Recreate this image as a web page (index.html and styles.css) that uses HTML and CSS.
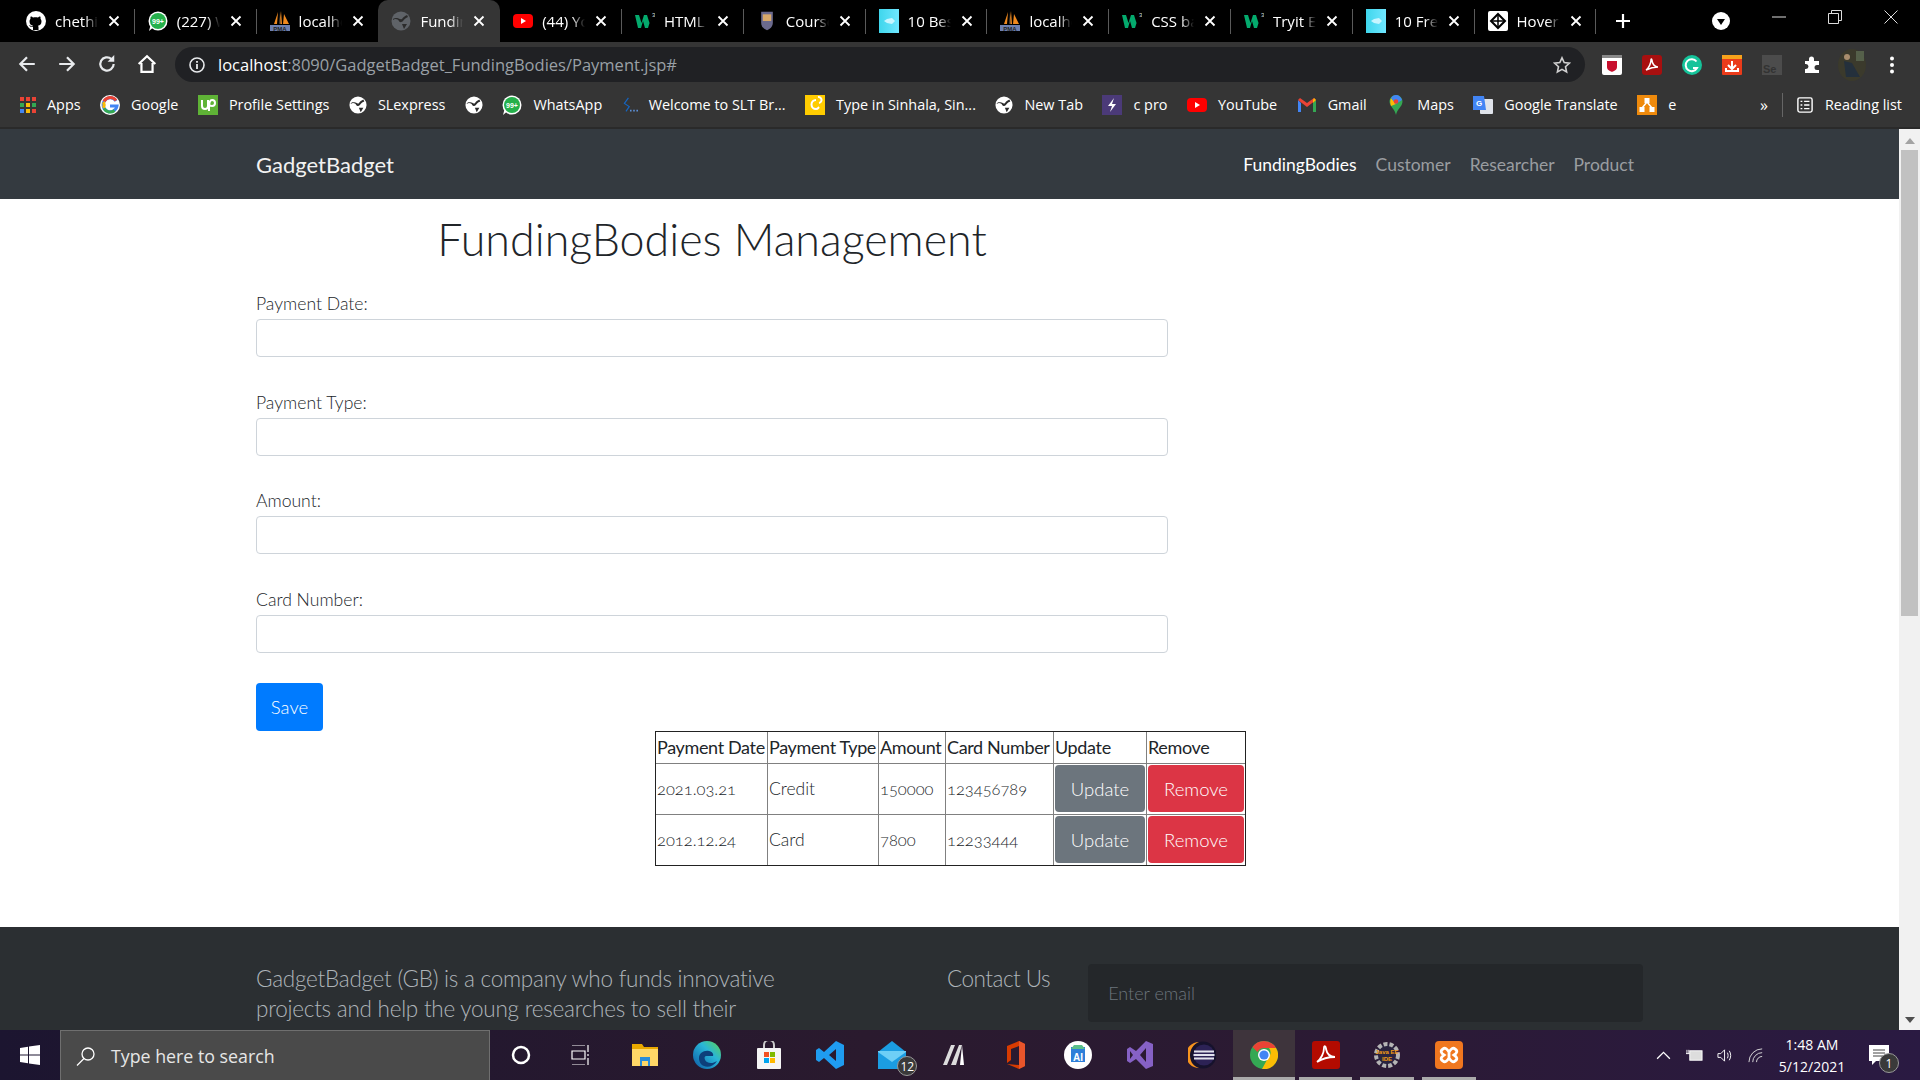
FILE: index.html
```html
<!DOCTYPE html>
<html lang="en">
<head>
    <meta charset="UTF-8">
    <title>FundingBodies Management</title>
    <link rel="stylesheet" href="styles.css">
</head>
<body>
    <!-- icons used more than once -->
    <svg class="defs" width="0" height="0">
        <symbol id="i-github" viewBox="0 0 20 20"><circle cx="10" cy="10" r="10" fill="#fff"/><path d="M7 19v-3c-3 .6-3.500-1.500-4-2 1 0 1.500 1 2.500 1.300.7.200 1.200 0 1.500-.5-2-.5-3.500-1.500-3.500-4.500 0-1 .3-1.800 1-2.500-.2-.8-.1-1.600.2-2.300 1 0 1.800.6 2.400 1 1.500-.4 3.300-.4 4.800 0 .6-.4 1.400-1 2.400-1 .3.700.4 1.500.2 2.300.7.700 1 1.500 1 2.500 0 3-1.500 4-3.500 4.500.4.500.5 1 .5 1.700V19z" fill="#000"/></symbol>
        <symbol id="i-whatsapp" viewBox="0 0 20 20"><circle cx="10" cy="10" r="9.500" fill="#fff"/><path d="M1 20l1.500-5.500h5z" fill="#fff"/><circle cx="10" cy="10" r="8" fill="#25b04b"/><text x="10" y="12.600" font-size="7" font-weight="700" fill="#fff" text-anchor="middle" font-family="Liberation Sans">99+</text></symbol>
        <symbol id="i-pma" viewBox="0 0 20 20"><path d="M8 1L4 13h3zM11 0l-2 13h3zM14 3l-1 10h6z" fill="#f0891d"/><path d="M10 0L9 13h1.500z" fill="#333"/><rect y="14" width="20" height="6" fill="#6d7fae"/><text x="10" y="19.500" font-size="6" font-weight="700" fill="#222" text-anchor="middle" font-family="Liberation Sans">PMA</text></symbol>
        <symbol id="i-globe" viewBox="0 0 20 20"><circle cx="10" cy="10" r="9.500" fill="currentColor"/><path d="M2 9c2-2 5-1 6 1s3 1 4 0 2-3 5-4l-1-2c-2 1-4 2-5 4-2 1-3-1-5-1s-3 0-4 1zM11 13l5 0-3 5z" class="globe-land"/></symbol>
        <symbol id="i-youtube" viewBox="0 0 20 20"><rect y="3" width="20" height="14" rx="4" fill="#f00"/><path d="M8 7l5 3-5 3z" fill="#fff"/></symbol>
        <symbol id="i-w3" viewBox="0 0 20 20"><path d="M0 4h4l2.500 8L9 4h3l2.500 8L17 4l0 0-4 13h-3L8 10l-2 7H3z" fill="#04aa6d"/><text x="17" y="6" font-size="6" fill="#ddd" font-family="Liberation Sans">3</text></symbol>
        <symbol id="i-fish" viewBox="0 0 20 24"><defs><linearGradient id="g-fish" x1="0" y1="0" x2="1" y2="0"><stop offset="0" stop-color="#3fd6ec"/><stop offset="1" stop-color="#6fe6ff"/></linearGradient></defs><rect width="20" height="24" fill="url(#g-fish)"/><path d="M5 12l3-2 5-1 3 3-3 3-5-1z" fill="#c7f5ff"/></symbol>
        <symbol id="i-close" viewBox="0 0 12 12"><path d="M1.500 1.500l9 9M10.500 1.500l-9 9" stroke="#fff" stroke-width="1.800" fill="none"/></symbol>
    </svg>

    <div class="tabstrip">
        <div class="tab"><svg class="favicon"><use href="#i-github"/></svg><span class="tab-title">chethil</span><svg class="tab-x"><use href="#i-close"/></svg></div>
        <div class="tab"><svg class="favicon"><use href="#i-whatsapp"/></svg><span class="tab-title">(227) W</span><svg class="tab-x"><use href="#i-close"/></svg></div>
        <div class="tab tab-noline"><svg class="favicon"><use href="#i-pma"/></svg><span class="tab-title">localho</span><svg class="tab-x"><use href="#i-close"/></svg></div>
        <div class="tab tab-active"><svg class="favicon globe-dim"><use href="#i-globe"/></svg><span class="tab-title">Funding</span><svg class="tab-x"><use href="#i-close"/></svg></div>
        <div class="tab"><svg class="favicon"><use href="#i-youtube"/></svg><span class="tab-title">(44) Yo</span><svg class="tab-x"><use href="#i-close"/></svg></div>
        <div class="tab"><svg class="favicon"><use href="#i-w3"/></svg><span class="tab-title">HTML</span><svg class="tab-x"><use href="#i-close"/></svg></div>
        <div class="tab"><svg class="favicon" viewBox="0 0 20 24"><path d="M3 1h14v13c0 5-4 8-7 9-3-1-7-4-7-9z" fill="#6b6a8e"/><rect x="5" y="4" width="10" height="8" fill="#d9a96a"/></svg><span class="tab-title">Course</span><svg class="tab-x"><use href="#i-close"/></svg></div>
        <div class="tab"><svg class="favicon favicon-tall"><use href="#i-fish"/></svg><span class="tab-title">10 Bes</span><svg class="tab-x"><use href="#i-close"/></svg></div>
        <div class="tab"><svg class="favicon"><use href="#i-pma"/></svg><span class="tab-title">localho</span><svg class="tab-x"><use href="#i-close"/></svg></div>
        <div class="tab"><svg class="favicon"><use href="#i-w3"/></svg><span class="tab-title">CSS ba</span><svg class="tab-x"><use href="#i-close"/></svg></div>
        <div class="tab"><svg class="favicon"><use href="#i-w3"/></svg><span class="tab-title">Tryit E</span><svg class="tab-x"><use href="#i-close"/></svg></div>
        <div class="tab"><svg class="favicon favicon-tall"><use href="#i-fish"/></svg><span class="tab-title">10 Fre</span><svg class="tab-x"><use href="#i-close"/></svg></div>
        <div class="tab"><svg class="favicon" viewBox="0 0 20 20"><rect width="20" height="20" rx="2" fill="#fff"/><path d="M10 3l7 7-7 7-7-7z" fill="none" stroke="#000" stroke-width="2"/><path d="M3 10h14M10 3v14" stroke="#000" stroke-width="1.500"/></svg><span class="tab-title">Hover</span><svg class="tab-x"><use href="#i-close"/></svg></div>
        <svg class="newtab" viewBox="0 0 16 16"><path d="M8 1v14M1 8h14" stroke="#fff" stroke-width="2.200"/></svg>
        <svg class="tab-search" viewBox="0 0 18 18"><circle cx="9" cy="9" r="9" fill="#fff"/><path d="M5 7h8l-4 6z" fill="#000"/></svg>
        <div class="window-btns">
            <svg viewBox="0 0 14 14"><path d="M0 7h14" stroke="#ddd"/></svg>
            <svg viewBox="0 0 14 14"><path d="M3.500 3V.5h10v10H11M.5 3.500h10v10H.5z" stroke="#ddd" fill="none"/></svg>
            <svg viewBox="0 0 14 14"><path d="M.5.5l13 13M13.500.5l-13 13" stroke="#ddd" fill="none"/></svg>
        </div>
    </div>

    <div class="toolbar">
        <svg class="tool" viewBox="0 0 18 18"><path d="M16 9H3M9 3L3 9l6 6" stroke="#e8eaed" stroke-width="2" fill="none"/></svg>
        <svg class="tool" viewBox="0 0 18 18"><path d="M2 9h13M9 3l6 6-6 6" stroke="#e8eaed" stroke-width="2" fill="none"/></svg>
        <svg class="tool" viewBox="0 0 18 18"><path d="M15 9a6 6 0 1 1-2-4.500" stroke="#e8eaed" stroke-width="2" fill="none"/><path d="M15.500 1v6h-6z" fill="#e8eaed"/></svg>
        <svg class="tool" viewBox="0 0 18 18"><path d="M1.500 9L9 2l7.500 7M4 8v8h10V8" stroke="#fff" stroke-width="2" fill="none"/></svg>
        <div class="address">
            <svg class="info" viewBox="0 0 16 16"><circle cx="8" cy="8" r="7" stroke="#e8eaed" stroke-width="1.600" fill="none"/><path d="M8 7v5M8 4v1.800" stroke="#e8eaed" stroke-width="1.800"/></svg>
            <span class="url"><b>localhost</b>:8090/GadgetBadget_FundingBodies/Payment.jsp#</span>
            <svg class="star" viewBox="0 0 18 18"><path d="M9 1.800l2.200 4.800 5.200.6-3.900 3.500 1.100 5.200L9 13.300l-4.600 2.600 1.100-5.200L1.600 7.200l5.200-.6z" stroke="#d0d0d0" stroke-width="1.600" fill="none"/></svg>
        </div>
        <div class="extensions">
            <svg viewBox="0 0 20 20"><rect width="20" height="20" rx="2" fill="#fff"/><rect width="20" height="3" fill="#888"/><path d="M5 6h10v6c0 3-3 4-5 5-2-1-5-2-5-5z" fill="#c8102e"/></svg>
            <svg viewBox="0 0 20 20"><rect width="20" height="20" rx="3" fill="#a80f0f"/><path d="M4 15c3-2 5-7 5-10 0-2 1-1 1 1 1 4 3 6 6 6-4 0-8 1-12 3z" fill="none" stroke="#fff" stroke-width="1.500"/></svg>
            <svg viewBox="0 0 20 20"><circle cx="10" cy="10" r="10" fill="#15c39a"/><path d="M14.500 6.500A6 6 0 1 0 15 13h-4" stroke="#fff" stroke-width="2" fill="none"/></svg>
            <svg viewBox="0 0 20 20"><rect width="20" height="20" rx="1" fill="#ea3b1a"/><rect width="20" height="4" fill="#f7a21b"/><path d="M10 6v8M6 10l4 4 4-4M4 13v3h12v-3" stroke="#fff" stroke-width="2" fill="none"/></svg>
            <svg viewBox="0 0 20 20"><rect width="20" height="20" fill="#4c4c4c"/><text x="1" y="18" font-size="11" font-weight="700" fill="#333" font-family="Liberation Sans">Se</text></svg>
            <svg viewBox="0 0 20 20"><path d="M3 6h4V4a2.500 2.500 0 0 1 5 0v2h5v4h-2a2.500 2.500 0 0 0 0 5h2v3H3v-4h1a2.500 2.500 0 0 0 0-5H3z" fill="#fff"/></svg>
            <svg class="avatar" viewBox="0 0 28 32"><ellipse cx="14" cy="16" rx="14" ry="16" fill="#3b3a2c"/><circle cx="9" cy="8" r="3" fill="#a98d6d"/><path d="M6 12l8 2 8 14H8z" fill="#24303c"/><path d="M18 2h8v10h-8z" fill="#55604a"/></svg>
            <svg viewBox="0 0 20 20"><circle cx="10" cy="3.500" r="2" fill="#fff"/><circle cx="10" cy="10" r="2" fill="#fff"/><circle cx="10" cy="16.500" r="2" fill="#fff"/></svg>
        </div>
    </div>

    <div class="bookmarks">
        <div class="bm"><svg class="bm-icon" viewBox="0 0 16 16"><g><rect width="4" height="4" fill="#ea4335"/><rect x="6" width="4" height="4" fill="#ea4335"/><rect x="12" width="4" height="4" fill="#ea4335"/><rect y="6" width="4" height="4" fill="#34a853"/><rect x="6" y="6" width="4" height="4" fill="#fbbc05"/><rect x="12" y="6" width="4" height="4" fill="#34a853"/><rect y="12" width="4" height="4" fill="#4285f4"/><rect x="6" y="12" width="4" height="4" fill="#fbbc05"/><rect x="12" y="12" width="4" height="4" fill="#ea4335"/></g></svg>Apps</div>
        <div class="bm"><svg class="bm-icon bm-big" viewBox="0 0 20 20"><circle cx="10" cy="10" r="10" fill="#fff"/><path d="M16 6a7 7 0 1 0 1 5h-7" fill="none" stroke="#4285f4" stroke-width="3"/><path d="M4 6.500a7 7 0 0 1 12-1" fill="none" stroke="#ea4335" stroke-width="3"/><path d="M3.500 13a7 7 0 0 0 0-6" fill="none" stroke="#fbbc05" stroke-width="3"/><path d="M4 13.500a7 7 0 0 0 10.500 2" fill="none" stroke="#34a853" stroke-width="3"/></svg>Google</div>
        <div class="bm"><svg class="bm-icon bm-big" viewBox="0 0 20 20"><rect width="20" height="20" fill="#5fb336"/><path d="M4 5v6a3 3 0 0 0 6 0V5c0 4 2 6 4 6a2.500 2.500 0 0 0 0-6c-2 0-3 2-3 8v3" fill="none" stroke="#fff" stroke-width="2"/></svg>Profile Settings</div>
        <div class="bm"><svg class="bm-icon globe-white"><use href="#i-globe"/></svg>SLexpress</div>
        <div class="bm"><svg class="bm-icon globe-white bm-only"><use href="#i-globe"/></svg></div>
        <div class="bm"><svg class="bm-icon bm-big"><use href="#i-whatsapp"/></svg>WhatsApp</div>
        <div class="bm"><svg class="bm-icon" viewBox="0 0 20 20"><path d="M8 1L3 8l6 4-4 6" fill="none" stroke="#1565c0" stroke-width="1.500"/><path d="M10 16h2v2h-2zM14 16h2v2h-2zM18 16h2v2h-2z" fill="#5c8fd6"/></svg>Welcome to SLT Br...</div>
        <div class="bm"><svg class="bm-icon bm-big" viewBox="0 0 20 20"><rect width="20" height="20" fill="#ffcc00"/><path d="M11 5a4 4 0 1 0 0 9c2 0 2-1 3-2M13 2a3 3 0 1 1 1 6" fill="none" stroke="#fff" stroke-width="2"/></svg>Type in Sinhala, Sin...</div>
        <div class="bm"><svg class="bm-icon globe-white"><use href="#i-globe"/></svg>New Tab</div>
        <div class="bm"><svg class="bm-icon bm-big" viewBox="0 0 20 20"><rect width="20" height="20" fill="#4b3a78"/><path d="M12 3L6 11h4l-2 6 6-8h-4z" fill="#fff"/></svg>c pro</div>
        <div class="bm"><svg class="bm-icon bm-big"><use href="#i-youtube"/></svg>YouTube</div>
        <div class="bm"><svg class="bm-icon bm-big" viewBox="0 0 20 20"><path d="M1 5v12h3V8z" fill="#4285f4"/><path d="M19 5v12h-3V8z" fill="#34a853"/><path d="M1 5l9 7 9-7-2-2-7 5-7-5z" fill="#ea4335"/><path d="M17 3l2 2-3 3V5z" fill="#fbbc05"/></svg>Gmail</div>
        <div class="bm"><svg class="bm-icon bm-big" viewBox="0 0 20 20"><path d="M10 0a6.500 6.500 0 0 1 6 9c-1 3-5 6-6 11-1-5-5-8-6-11a6.500 6.500 0 0 1 6-9z" fill="#34a853"/><path d="M5 3l5 6-5 2c-1-3-1-6 0-8z" fill="#fbbc05"/><path d="M10 0c3 0 5 2 6 5l-6 4-5-6c1-2 3-3 5-3z" fill="#4285f4"/><circle cx="10" cy="6.500" r="2.300" fill="#ea4335"/></svg>Maps</div>
        <div class="bm"><svg class="bm-icon bm-big" viewBox="0 0 20 20"><rect x="7" y="4" width="13" height="15" rx="1" fill="#dfe3ea"/><path d="M0 1h11l2 14H0z" fill="#4285f4"/><text x="6" y="11" font-size="8" font-weight="700" fill="#fff" text-anchor="middle" font-family="Liberation Sans">G</text></svg>Google Translate</div>
        <div class="bm"><svg class="bm-icon bm-big" viewBox="0 0 20 20"><rect width="20" height="20" fill="#ef8a0c"/><path d="M10 7l-5 6M10 7l5 6" stroke="#fff" stroke-width="1.500"/><rect x="7.500" y="3" width="5" height="5" fill="#fff"/><rect x="2.500" y="12" width="5" height="5" fill="#fff"/><rect x="12.500" y="12" width="5" height="5" fill="#fff"/></svg>e</div>
        <div class="bm-right">
            <span class="bm-more">&raquo;</span>
            <span class="bm-sep"></span>
            <svg class="bm-icon bm-list" viewBox="0 0 18 18"><rect x="1" y="1" width="16" height="16" rx="2" fill="none" stroke="#fff" stroke-width="1.600"/><path d="M4 5h2M8 5h6M4 9h2M8 9h6M4 13h2M8 13h6" stroke="#fff" stroke-width="1.500"/></svg>
            <span>Reading list</span>
        </div>
    </div>

    <div class="viewport">
        <div class="page">
            <nav class="navbar">
                <a class="brand" href="#">GadgetBadget</a>
                <div class="nav-links">
                    <a class="nav-link active" href="#">FundingBodies</a>
                    <a class="nav-link" href="#">Customer</a>
                    <a class="nav-link" href="#">Researcher</a>
                    <a class="nav-link" href="#">Product</a>
                </div>
            </nav>

            <main class="content">
                <form class="payment-form">
                    <h1>FundingBodies Management</h1>
                    <div class="form-group">
                        <label>Payment Date:</label>
                        <input type="text" class="form-control">
                    </div>
                    <div class="form-group">
                        <label>Payment Type:</label>
                        <input type="text" class="form-control">
                    </div>
                    <div class="form-group">
                        <label>Amount:</label>
                        <input type="text" class="form-control">
                    </div>
                    <div class="form-group">
                        <label>Card Number:</label>
                        <input type="text" class="form-control">
                    </div>
                    <button type="button" class="btn btn-save">Save</button>
                </form>

                <table class="payments">
                    <colgroup>
                        <col class="c-date"><col class="c-type"><col class="c-amount"><col class="c-card"><col class="c-update"><col class="c-remove">
                    </colgroup>
                    <tr>
                        <th>Payment Date</th>
                        <th>Payment Type</th>
                        <th>Amount</th>
                        <th>Card Number</th>
                        <th>Update</th>
                        <th>Remove</th>
                    </tr>
                    <tr>
                        <td class="num">2021.03.21</td>
                        <td>Credit</td>
                        <td class="num">150000</td>
                        <td class="num">123456789</td>
                        <td><button type="button" class="btn btn-update">Update</button></td>
                        <td><button type="button" class="btn btn-remove">Remove</button></td>
                    </tr>
                    <tr>
                        <td class="num">2012.12.24</td>
                        <td>Card</td>
                        <td class="num">7800</td>
                        <td class="num">12233444</td>
                        <td><button type="button" class="btn btn-update">Update</button></td>
                        <td><button type="button" class="btn btn-remove">Remove</button></td>
                    </tr>
                </table>
            </main>

            <footer class="footer">
                <p class="about">GadgetBadget (GB) is a company who funds innovative projects and help the young researches to sell their products to consumers. Accordingly, the funding</p>
                <div class="contact">
                    <h4>Contact Us</h4>
                    <input type="text" class="email" placeholder="Enter email">
                </div>
            </footer>
        </div>

        <div class="scrollbar">
            <span class="arrow arrow-up"></span>
            <span class="thumb"></span>
            <span class="arrow arrow-down"></span>
        </div>
    </div>

    <div class="taskbar">
        <div class="start">
            <svg viewBox="0 0 20 20"><path d="M0 3l8-1.200V9.500H0zM9 1.600L20 0v9.500H9zM0 10.500h8v7.700L0 17zM9 10.500h11V20L9 18.400z" fill="#fff"/></svg>
        </div>
        <div class="search">
            <svg viewBox="0 0 20 20"><circle cx="12" cy="8" r="6" fill="none" stroke="#fff" stroke-width="1.300"/><path d="M8 12.500L1 19.500" stroke="#fff" stroke-width="1.300"/></svg>
            <span>Type here to search</span>
        </div>
        <div class="task"><svg viewBox="0 0 20 20"><circle cx="10" cy="10" r="8" fill="none" stroke="#fff" stroke-width="2.500"/></svg></div>
        <div class="task"><svg class="taskview" viewBox="0 0 20 20"><path d="M2 0h13M2 20h13M2 6h13v8H2zM18 0v7M18 9v2M18 13v7" stroke="#fff" fill="none" stroke-width="1.200"/></svg></div>
        <div class="task"><svg class="lg" viewBox="0 0 28 28"><path d="M1 3h10l2 3h14v19H1z" fill="#e9a800"/><path d="M1 8h26v17H1z" fill="#ffd767"/><path d="M9 16h10v9h-2v-5h-6v5H9z" fill="#2a8dd8"/></svg></div>
        <div class="task"><svg class="lg" viewBox="0 0 28 28"><defs><linearGradient id="g-edge" x1="0" y1="1" x2="1" y2="0"><stop offset="0" stop-color="#0c59a4"/><stop offset=".6" stop-color="#29b6d8"/><stop offset="1" stop-color="#5fd44f"/></linearGradient></defs><circle cx="14" cy="14" r="14" fill="url(#g-edge)"/><path d="M6 17c0-5 5-8 10-7 3 .5 5 3 4 5h-7c-2 0-2 4 1 6 3 2 7 1 10-1-3 5-9 7-13 5-3-1-5-4-5-8z" fill="#0d3f7a"/></svg></div>
        <div class="task"><svg class="lg" viewBox="0 0 28 28"><path d="M9 8V4a5 5 0 0 1 10 0v4" stroke="#ccc" stroke-width="2" fill="none"/><rect x="2" y="7" width="24" height="21" rx="1" fill="#f5f5f5"/><rect x="9" y="11" width="5" height="5" fill="#f25022"/><rect x="15" y="11" width="5" height="5" fill="#7fba00"/><rect x="9" y="17" width="5" height="5" fill="#00a4ef"/><rect x="15" y="17" width="5" height="5" fill="#ffb900"/></svg></div>
        <div class="task"><svg class="lg" viewBox="0 0 28 28"><path d="M20 0l8 4v20l-8 4-12-11-5 4-3-2v-10l3-2 5 4zM20 8l-7 6 7 6z" fill="#1f9cf0"/></svg></div>
        <div class="task"><span class="task-icon"><svg class="lg" viewBox="0 0 28 28"><path d="M0 11L14 0l14 11v17H0z" fill="#1b9de2"/><path d="M0 11l14 10 14-10v-1H0z" fill="#6ecff6"/></svg><span class="badge">12</span></span></div>
        <div class="task"><svg class="lg" viewBox="0 0 28 28"><path d="M3 24L11 4h4L7 24zM11 24L19 4h3L16 24z" fill="#ddd"/><path d="M22 4l2 20h-4z" fill="#fff"/></svg></div>
        <div class="task"><svg class="lg" viewBox="0 0 28 28"><path d="M5 5l12-5 6 3v22l-6 3-12-5 12 1V5l-8 3v11l-4 3z" fill="#d83b01"/><path d="M17 0l6 3v22l-6 3z" fill="#e8552b"/></svg></div>
        <div class="task"><svg class="lg" viewBox="0 0 28 28"><circle cx="14" cy="14" r="14" fill="#fff"/><path d="M7 6h14v15H7z" fill="#2e7fd9"/><path d="M10 4h8l3 4H7z" fill="#5bbf8a"/><text x="14" y="20" font-size="10" font-weight="700" fill="#fff" text-anchor="middle" font-family="Liberation Sans">AI</text></svg></div>
        <div class="task"><svg class="lg" viewBox="0 0 28 28"><path d="M20 0l7 3v22l-7 3-10-10-6 4-3-2V8l3-2 6 4zM20 7l-6 7 6 7zM4 10v8l3-4z" fill="#8661c5"/></svg></div>
        <div class="task"><svg class="lg" viewBox="0 0 28 28"><circle cx="15" cy="14" r="13.500" fill="#16122c"/><path d="M11 1a13 13 0 0 0 0 26c-7-2-9-8-9-13s3-11 9-13z" fill="#f7941e"/><circle cx="16" cy="14" r="10.500" fill="#2c2255"/><path d="M6 10.500h20M5.500 14h21M6 17.500h20" stroke="#e3e3ee" stroke-width="2"/></svg></div>
        <div class="task task-active"><svg class="lg" viewBox="0 0 28 28"><circle cx="14" cy="14" r="14" fill="#34a853"/><path d="M14 0a14 14 0 0 1 12 7H14a7 7 0 0 0-6.500 4L2.500 6A14 14 0 0 1 14 0z" fill="#ea4335"/><path d="M26 7a14 14 0 0 1-14 21l6-11a7 7 0 0 0 1-10z" fill="#fbbc05"/><circle cx="14" cy="14" r="6" fill="#fff"/><circle cx="14" cy="14" r="4.600" fill="#4285f4"/></svg></div>
        <div class="task task-open"><svg class="lg" viewBox="0 0 28 28"><rect width="28" height="28" rx="3" fill="#b30b00"/><path d="M5 21c4-3 7-9 7-14 0-3 2-2 2 1 1 5 4 8 9 8-6 0-12 1-18 5z" fill="none" stroke="#fff" stroke-width="1.800"/></svg></div>
        <div class="task task-open"><svg class="lg" viewBox="0 0 28 28"><circle cx="14" cy="14" r="11" fill="#2a2440" stroke="#b5b5b5" stroke-width="4" stroke-dasharray="4 2"/><text x="14" y="13" font-size="6" font-weight="700" fill="#f39c12" text-anchor="middle" font-family="Liberation Sans">Java EE</text><text x="14" y="20" font-size="6" font-weight="700" fill="#f39c12" text-anchor="middle" font-family="Liberation Sans">IDE</text></svg></div>
        <div class="task task-open"><svg class="lg" viewBox="0 0 28 28"><rect width="28" height="28" rx="4" fill="#f0771f"/><path d="M8 8C10 6 12 8 14 11 16 8 18 6 20 8 23 10 22 12 19 14 22 16 23 18 20 20 18 22 16 20 14 17 12 20 10 22 8 20 5 18 6 16 9 14 6 12 5 10 8 8zM14 11v6" fill="none" stroke="#fff" stroke-width="2.800"/></svg></div>
        <div class="tray">
            <svg viewBox="0 0 16 16"><path d="M2 11l6-6 6 6" stroke="#fff" fill="none" stroke-width="1.200"/></svg>
            <svg viewBox="0 0 18 16"><rect x="4" y="3" width="13" height="10" fill="#ddd" stroke="#fff"/><path d="M0 6h4M1 2v4M3 2v4" stroke="#fff"/></svg>
            <svg viewBox="0 0 18 16"><path d="M1 6h3l4-4v12l-4-4H1zM11 5c1 2 1 4 0 6M13 3c2 3 2 7 0 10" fill="none" stroke="#fff"/></svg>
            <svg viewBox="0 0 18 16"><path d="M1 15a14 14 0 0 1 14-14M5 15A10 10 0 0 1 15 5M9 15a6 6 0 0 1 6-6" fill="none" stroke="#ddd"/></svg>
            <div class="clock"><span>1:48 AM</span><span>5/12/2021</span></div>
            <span class="notify">
                <svg viewBox="0 0 20 20"><path d="M0 0h20v16H7l-4 4v-4H0z" fill="#fff"/><path d="M4 5h12M4 8h12M4 11h12" stroke="#444"/></svg>
                <span class="badge notify-badge">1</span>
            </span>
        </div>
    </div>
</body>
</html>
```

FILE: styles.css
```css
* {
    box-sizing: border-box;
}
html, body {
    height: 100%;
}
body {
    margin: 0;
    display: flex;
    flex-direction: column;
    height: 1080px;
    overflow: hidden;
    font-family: "Open Sans", sans-serif;
    background: #000;
}
.defs {
    position: absolute;
}

/* browser tabs */
.tabstrip {
    height: 42px;
    flex: none;
    display: flex;
    align-items: center;
    padding-left: 13px;
    background: #000;
    color: #fff;
}
.tab {
    width: 121.800px;
    height: 42px;
    flex: none;
    display: flex;
    align-items: center;
    padding-left: 13px;
    position: relative;
    font-size: 15px;
}
.tab::after {
    content: "";
    position: absolute;
    right: 0;
    top: 9px;
    height: 25px;
    width: 1px;
    background: #5a5a5a;
}
.tab-noline::after,
.tab-active::after {
    display: none;
}
.tab-active {
    background: #353535;
    border-radius: 10px 10px 0 0;
}
.favicon {
    width: 20px;
    height: 20px;
    flex: none;
}
.favicon-tall {
    height: 24px;
}
.globe-dim {
    color: #5f6368;
}
.globe-land {
    fill: #2b2b2b;
}
.tab-title {
    width: 43px;
    margin-left: 9px;
    overflow: hidden;
    white-space: nowrap;
    mask-image: linear-gradient(to right, #000 70%, transparent);
    -webkit-mask-image: linear-gradient(to right, #000 70%, transparent);
}
.tab-x {
    width: 12px;
    height: 12px;
    margin-left: 10px;
    flex: none;
}
.newtab {
    width: 16px;
    height: 16px;
    margin-left: 19px;
    flex: none;
}
.tab-search {
    width: 18px;
    height: 18px;
    margin-left: 81px;
    flex: none;
}
.window-btns {
    display: flex;
    margin-left: 42px;
    gap: 42px;
    margin-top: -8px;
}
.window-btns svg {
    width: 14px;
    height: 14px;
}

/* address bar */
.toolbar {
    height: 40px;
    flex: none;
    display: flex;
    align-items: flex-end;
    background: #353535;
    padding-left: 17px;
}
.tool {
    width: 20px;
    height: 20px;
    margin-right: 20px;
    margin-bottom: 8px;
    flex: none;
}
.address {
    width: 1410px;
    height: 35px;
    margin-left: -2px;
    display: flex;
    align-items: center;
    padding: 0 14px;
    background: #202124;
    border-radius: 18px;
    font-size: 16.500px;
    color: #9aa0a6;
}
.info {
    width: 16px;
    height: 16px;
    flex: none;
}
.url {
    margin-left: 13px;
    flex: 1;
}
.url b {
    font-weight: 400;
    color: #fff;
}
.star {
    width: 18px;
    height: 18px;
    margin-right: 0;
}
.extensions {
    display: flex;
    align-items: center;
    gap: 20px;
    margin-left: 17px;
    height: 35px;
}
.extensions svg {
    width: 20px;
    height: 20px;
}
.extensions .avatar {
    width: 28px;
    height: 32px;
    margin: 0 -4px;
}

/* bookmarks */
.bookmarks {
    height: 47px;
    flex: none;
    display: flex;
    align-items: center;
    padding-left: 20px;
    background: #353535;
    color: #fff;
    font-size: 14.400px;
    border-bottom: 2px solid #2a2a2a;
    white-space: nowrap;
}
.bm {
    display: flex;
    align-items: center;
    margin-right: 19.500px;
}
.bm-icon {
    width: 16px;
    height: 16px;
    margin-right: 11px;
    flex: none;
}
.bm-big {
    width: 20px;
    height: 20px;
}
.globe-white {
    width: 18px;
    height: 18px;
    color: #fff;
}
.bm-only {
    margin-right: 0;
}
.bm-right {
    display: flex;
    align-items: center;
    margin-left: auto;
    padding-right: 18px;
}
.bm-more {
    font-size: 16px;
    margin-right: 14px;
}
.bm-sep {
    width: 1px;
    height: 24px;
    background: #666;
    margin-right: 14px;
}
.bm-list {
    margin-right: 12px;
}

/* the page itself */
.viewport {
    flex: 1;
    min-height: 0;
    display: flex;
    background: #fff;
}
.page {
    flex: 1;
    min-width: 0;
    display: flex;
    flex-direction: column;
    overflow: hidden;
    font-family: Lato, sans-serif;
    font-weight: 300;
    color: #212529;
    font-variant-numeric: oldstyle-nums;
}
.navbar {
    height: 70px;
    flex: none;
    display: flex;
    align-items: center;
    justify-content: space-between;
    padding: 0 265px 0 256px;
    background: #343a40;
}
.brand {
    font-size: 22px;
    color: #f2f2f2;
    text-decoration: none;
    font-weight: 400;
}
.nav-links {
    display: flex;
    gap: 19px;
}
.nav-link {
    font-size: 17.500px;
    color: #9a9da0;
    text-decoration: none;
    font-weight: 400;
}
.nav-link.active {
    color: #fff;
}
.content {
    height: 728px;
    flex: none;
    padding-left: 256px;
}
.payment-form {
    width: 912px;
}
h1 {
    margin: 0 0 12px;
    font-size: 44.800px;
    font-weight: 300;
    line-height: 80px;
    text-align: center;
}
.form-group {
    margin-bottom: 32.600px;
}
.form-group:last-of-type {
    margin-bottom: 30px;
}
label {
    display: block;
    height: 28px;
    line-height: 25px;
    font-size: 17.600px;
}
.form-control {
    display: block;
    width: 100%;
    height: 38px;
    border: 1px solid #ced4da;
    border-radius: 4px;
    background: #fff;
}
.btn {
    border: none;
    border-radius: 4px;
    color: #fff;
    font-family: Lato, sans-serif;
    font-size: 18.500px;
    font-weight: 300;
}
.btn-save {
    display: block;
    width: 67px;
    height: 48px;
    background: #007bff;
}
.payments {
    margin: 0 0 0 399px;
    width: 590px;
    table-layout: fixed;
    border-collapse: collapse;
    outline: 1px solid #222;
    outline-offset: -1px;
    font-size: 17.500px;
}
.c-date { width: 112px; }
.c-type { width: 111px; }
.c-amount { width: 67px; }
.c-card { width: 108px; }
.c-update { width: 93px; }
.c-remove { width: 99px; }
th, td {
    border: 1px solid #808080;
    padding: 1px;
    text-align: left;
    white-space: nowrap;
    overflow: hidden;
}
th {
    height: 32px;
    font-weight: 400;
    font-size: 18px;
    letter-spacing: -0.350px;
}
td {
    height: 51px;
}
td.num {
    font-size: 16.500px;
}
.btn-update,
.btn-remove {
    display: block;
    width: 100%;
    height: 47px;
}
.btn-update {
    background: #6c757d;
}
.btn-remove {
    background: #dc3545;
}
.footer {
    flex: 1;
    min-height: 0;
    display: flex;
    overflow: hidden;
    padding: 37px 0 0 256px;
    background: #2b2f32;
    color: #aeb4b9;
}
.about {
    width: 530px;
    margin: 0;
    font-size: 22.500px;
    line-height: 30px;
    letter-spacing: -0.250px;
}
.contact {
    display: flex;
    margin-left: 161px;
}
h4 {
    margin: 0;
    font-size: 22.500px;
    font-weight: 300;
    line-height: 30px;
    letter-spacing: -0.500px;
}
.email {
    width: 555px;
    height: 58px;
    margin: 0 0 0 38px;
    border: none;
    border-radius: 4px;
    background: #24272a;
    padding: 0 20px;
    font-family: Lato, sans-serif;
    font-size: 18px;
    font-weight: 300;
}
.email::placeholder {
    color: #6c757d;
}
.scrollbar {
    width: 21px;
    flex: none;
    display: flex;
    flex-direction: column;
    align-items: center;
    background: #f1f1f1;
}
.thumb {
    width: 17px;
    height: 466px;
    flex: none;
    background: #c1c1c1;
}
.arrow {
    flex: none;
    width: 0;
    height: 0;
    border-left: 5px solid transparent;
    border-right: 5px solid transparent;
}
.arrow-up {
    margin: 9px 0 6px;
    border-bottom: 6px solid #a3a3a3;
}
.arrow-down {
    margin: auto 0 7px;
    border-top: 6px solid #505050;
}

/* windows taskbar */
.taskbar {
    height: 50px;
    flex: none;
    display: flex;
    align-items: center;
    background: linear-gradient(to right, #1c1530, #2a1a2e 45%, #2b1a34 70%, #2a1a42);
    color: #fff;
}
.start {
    width: 60px;
    height: 100%;
    display: flex;
    align-items: center;
    justify-content: center;
}
.start svg {
    width: 20px;
    height: 20px;
}
.search {
    width: 430px;
    height: 100%;
    display: flex;
    align-items: center;
    padding-left: 15px;
    background: #4a4a4a;
    border: 1px solid #6f6f6f;
    border-bottom: none;
    font-size: 17.800px;
    color: #e6e6e6;
}
.search svg {
    width: 20px;
    height: 20px;
    margin-right: 15px;
}
.task {
    width: 61.900px;
    height: 100%;
    flex: none;
    display: flex;
    align-items: center;
    justify-content: center;
    position: relative;
}
.task svg {
    width: 20px;
    height: 20px;
}
.task svg.taskview {
    margin-right: 5px;
}
.task svg.lg {
    width: 28px;
    height: 28px;
}
.task-icon {
    position: relative;
    display: flex;
}
.badge {
    position: absolute;
    width: 20px;
    height: 20px;
    right: -11px;
    bottom: -7px;
    display: flex;
    align-items: center;
    justify-content: center;
    border-radius: 50%;
    background: #3a3a3a;
    border: 1px solid #999;
    font-size: 12px;
    color: #fff;
}
.task-active {
    background: #3e343c;
}
.task-active::after,
.task-open::after {
    content: "";
    position: absolute;
    left: 4px;
    right: 4px;
    bottom: 0;
    height: 3px;
    background: #aaa;
}
.task-active::after {
    left: 0;
    right: 0;
}
.tray {
    margin-left: auto;
    display: flex;
    align-items: center;
    gap: 14px;
    padding-right: 31px;
}
.tray > svg {
    width: 17px;
    height: 17px;
}
.clock {
    display: flex;
    flex-direction: column;
    align-items: center;
    gap: 5px;
    width: 76px;
    margin: 0 5px 0 -5px;
    font-size: 14px;
    line-height: 17px;
}
.notify {
    position: relative;
    display: flex;
}
.notify svg {
    width: 20px;
    height: 20px;
}
.notify-badge {
    right: -10px;
    bottom: -8px;
}
```
